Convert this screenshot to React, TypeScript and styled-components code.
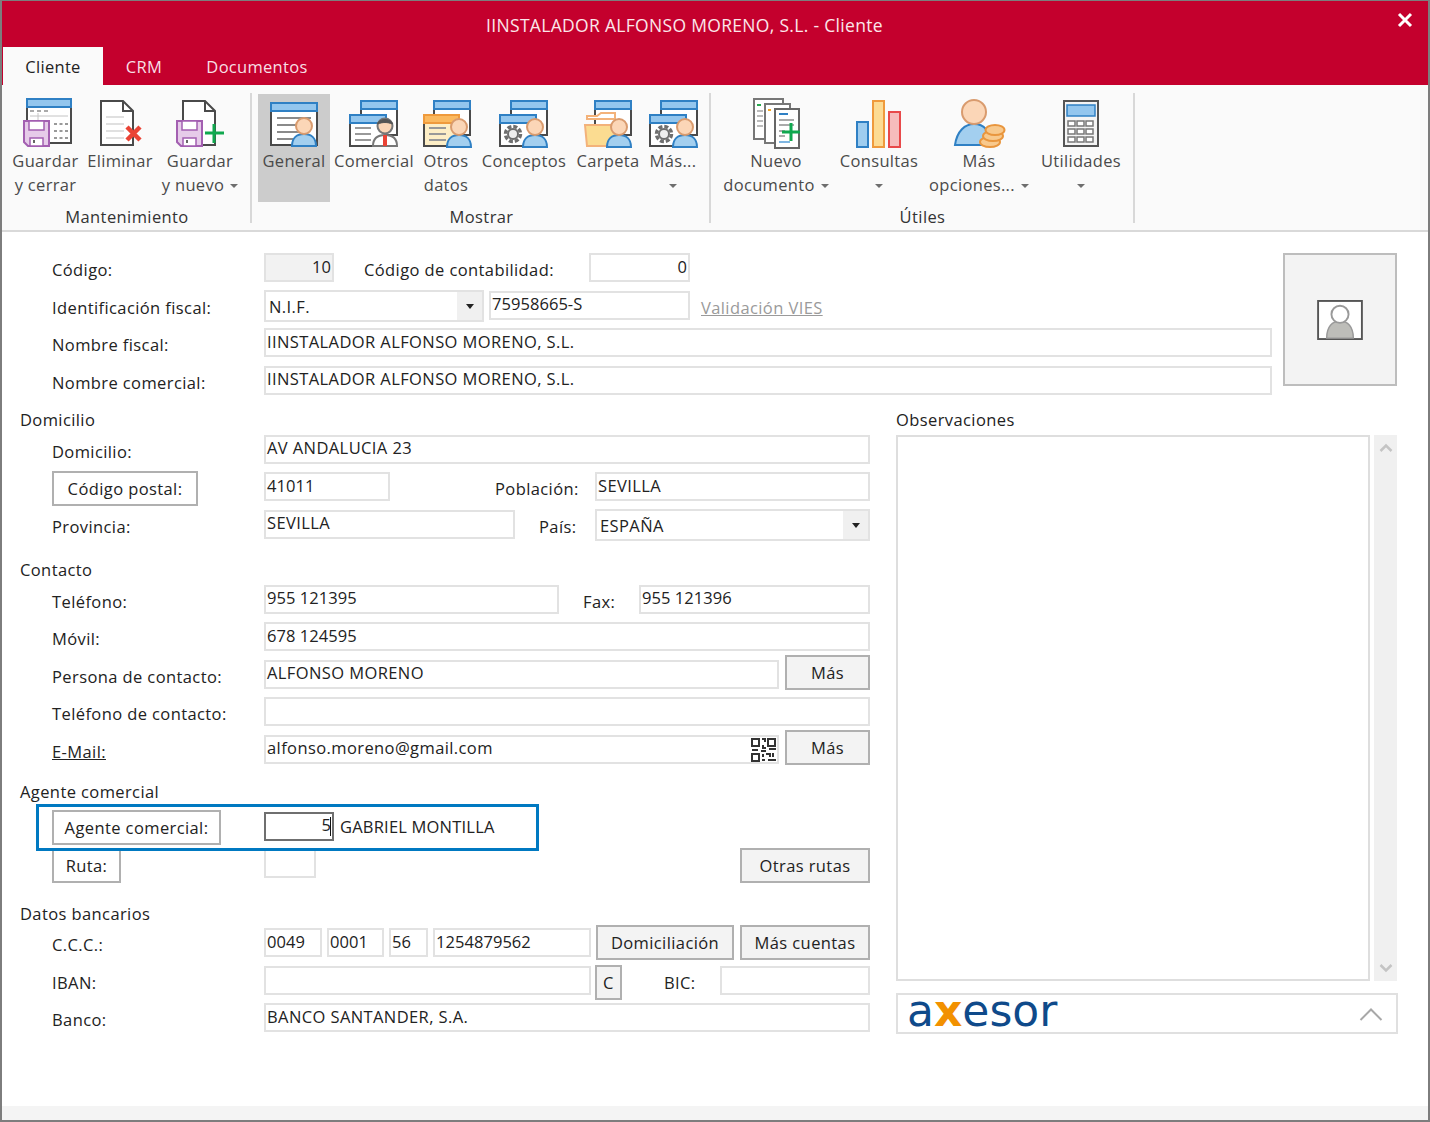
import React, { ReactNode } from 'react'
import styled, { createGlobalStyle } from 'styled-components'

const Global = createGlobalStyle`
  html, body { margin: 0; padding: 0; background: #fff; overflow: hidden; }
  * { box-sizing: border-box; }
`

const Win = styled.div`
  width: 1430px;
  height: 1122px;
  border: 2px solid #7d7d7d;
  border-top-width: 1px;
  display: flex;
  flex-direction: column;
  background: #fff;
  font-family: "Open Sans", "Noto Sans", sans-serif;
  font-size: 16.5px;
  letter-spacing: 0.4px;
  color: #222;
`

const TitleBar = styled.div`
  height: 44px;
  flex: none;
  background: #c4002d;
  color: #fbe6ea;
  font-size: 17.5px;
  letter-spacing: 0.31px;
  display: flex;
  align-items: center;
  justify-content: center;
  padding: 3px 61px 0 0;
  position: relative;
`

const CloseBtn = styled.svg`
  position: absolute;
  right: 15px;
  top: 11px;
`

const TabRow = styled.div`
  height: 40px;
  flex: none;
  background: #c4002d;
  display: flex;
  align-items: flex-end;
  padding-left: 1px;
`

const Tab = styled.div<{ $w: number; $active?: boolean }>`
  width: ${p => p.$w}px;
  height: 38px;
  display: flex;
  align-items: center;
  justify-content: center;
  letter-spacing: 0.3px;
  color: ${p => (p.$active ? '#222' : '#f8dfe4')};
  background: ${p => (p.$active ? '#fafafa' : 'transparent')};
`

const Ribbon = styled.div`
  height: 147px;
  flex: none;
  background: #fafafa;
  border-bottom: 2px solid #d9d9d9;
  display: flex;
  align-items: flex-start;
`

const Group = styled.div<{ $w: number; $pad: number }>`
  width: ${p => p.$w}px;
  padding: 9px 0 0 ${p => p.$pad}px;
  display: flex;
  flex-direction: column;
`

const GroupButtons = styled.div`
  display: flex;
  height: 108px;
`

const GroupLabel = styled.div`
  margin: 3px 0 0 -4px;
  line-height: 24px;
  text-align: center;
  color: #333;
`

const GroupSep = styled.div`
  width: 2px;
  height: 130px;
  margin-top: 8px;
  background: #d8d8d8;
`

const RibbonBtn = styled.div<{ $w: number; $active?: boolean }>`
  width: ${p => p.$w}px;
  flex: none;
  display: flex;
  flex-direction: column;
  align-items: center;
  background: ${p => (p.$active ? '#cccccc' : 'transparent')};
  color: #4a4a4a;
  letter-spacing: 0.32px;
  line-height: 24px;
  white-space: nowrap;
  svg { margin-top: 2px; flex: none; display: block; }
`

const BtnLine = styled.span`
  display: flex;
  align-items: center;
  height: 24px;
`

const Caret = styled.i<{ $ml?: number }>`
  display: inline-block;
  width: 0;
  height: 0;
  margin-left: ${p => p.$ml ?? 0}px;
  margin-top: 2px;
  border-left: 4px solid transparent;
  border-right: 4px solid transparent;
  border-top: 4px solid #6e6e6e;
`

const Body = styled.div`
  flex: 1;
  padding: 18.75px 0 0 18px;
`

const TopBlock = styled.div`
  display: flex;
`

const TopFields = styled.div`
  width: 1252px;
  margin-right: 11px;
`

const Photo = styled.div`
  width: 114px;
  height: 133px;
  margin-top: 2.25px;
  background: #f3f3f3;
  border: 2px solid #bdbdbd;
  display: flex;
  align-items: center;
  justify-content: center;
`

const Columns = styled.div`
  display: flex;
  gap: 26px;
`

const LeftCol = styled.div`
  width: 850px;
`

const RightCol = styled.div`
  width: 502px;
`

const SectionTitle = styled.div<{ $h: number; $pb?: number }>`
  height: ${p => p.$h}px;
  padding-bottom: ${p => p.$pb ?? 0}px;
  display: flex;
  align-items: flex-end;
  line-height: 24px;
  color: #222;
`

const Row = styled.div`
  height: 37.5px;
  padding-left: 32px;
  display: flex;
  align-items: center;
  white-space: nowrap;
`

const Slot = styled.div<{ $u?: boolean }>`
  width: 212px;
  flex: none;
  display: flex;
  align-items: center;
  text-decoration: ${p => (p.$u ? 'underline' : 'none')};
`

const InlineLabel = styled.div<{ $w: number; $ml: number }>`
  width: ${p => p.$w}px;
  margin-left: ${p => p.$ml}px;
  flex: none;
`

const Field = styled.div<{ $w: number; $ml?: number; $right?: boolean; $grey?: boolean; $dark?: boolean; $num?: boolean }>`
  width: ${p => p.$w}px;
  height: 29px;
  margin-left: ${p => p.$ml ?? 0}px;
  margin-bottom: 4px;
  flex: none;
  position: relative;
  display: flex;
  align-items: center;
  justify-content: ${p => (p.$right ? 'flex-end' : 'flex-start')};
  padding: 0 1px 3px 1px;
  letter-spacing: ${p => (p.$num ? '0.05px' : '0.4px')};
  border: 2px solid ${p => (p.$dark ? '#6f6f6f' : '#e2e2e2')};
  background: ${p => (p.$grey ? '#f2f2f2' : '#fff')};
  overflow: hidden;
`

const Select = styled.div<{ $w: number; $ml?: number }>`
  width: ${p => p.$w}px;
  height: 32px;
  margin-left: ${p => p.$ml ?? 0}px;
  margin-bottom: 2px;
  flex: none;
  display: flex;
  align-items: stretch;
  border: 2px solid #e2e2e2;
  background: #fff;
`

const SelectText = styled.div`
  flex: 1;
  padding: 1px 0 0 3px;
  display: flex;
  align-items: center;
`

const SelectArrow = styled.div`
  width: 25px;
  background: #f0f0f0;
  display: flex;
  align-items: center;
  justify-content: center;
  i {
    border-left: 4px solid transparent;
    border-right: 4px solid transparent;
    border-top: 5px solid #222;
  }
`

const VatLink = styled.div`
  margin-left: 11px;
  color: #9a9a9a;
  text-decoration: underline;
`

const Btn = styled.div<{ $w: number; $ml?: number; $up?: number; $white?: boolean; $right?: boolean }>`
  width: ${p => p.$w}px;
  height: 35px;
  margin-left: ${p => (p.$right ? 'auto' : `${p.$ml ?? 0}px`)};
  margin-bottom: ${p => p.$up ?? 0}px;
  flex: none;
  display: flex;
  align-items: center;
  justify-content: center;
  border: 2px solid #b0b0b0;
  background: ${p => (p.$white ? '#fff' : '#f3f3f3')};
`

const AgentName = styled.div`
  margin-left: 6px;
  margin-bottom: 4px;
  letter-spacing: 0.2px;
`

const AgentGroup = styled.div`
  position: relative;
`

const Highlight = styled.div`
  position: absolute;
  left: 16px;
  top: -5px;
  width: 503px;
  height: 47px;
  border: 3px solid #0079c1;
  pointer-events: none;
`

const Cursor = styled.span`
  position: absolute;
  right: 1px;
  top: 3px;
  width: 1px;
  height: 19px;
  background: #111;
`

const QrIcon = styled.svg`
  position: absolute;
  right: 0;
  top: 1px;
`

const ObsBox = styled.div`
  height: 546px;
  margin-top: 2.75px;
  display: flex;
  justify-content: space-between;
`

const ObsArea = styled.div`
  width: 474px;
  border: 2px solid #dedede;
  background: #fff;
`

const ScrollTrack = styled.div`
  width: 23px;
  margin-right: 1px;
  background: #f0f0f0;
  display: flex;
  flex-direction: column;
  align-items: center;
  justify-content: space-between;
  padding: 8px 0;
`

const LogoBox = styled.div`
  height: 41px;
  margin-top: 12px;
  border: 2px solid #e0e0e0;
  display: flex;
  align-items: center;
  justify-content: space-between;
  padding: 0 13px 0 9px;
`

const Logo = styled.div`
  font-family: "DejaVu Sans", sans-serif;
  font-size: 44px;
  letter-spacing: 0;
  line-height: 37px;
  height: 37px;
  color: #0f4a8a;
  margin-top: -6px;
  span { color: #f29100; font-weight: 700; }
`

const BottomBar = styled.div`
  height: 14px;
  flex: none;
  background: #f4f4f4;
`

const person = (cx: number, cy: number, shirt = '#a3cfef', line = '#2f80c4') => (
  <>
    <path d={`M${cx - 12} ${cy + 20} c0 -8 5 -12 12 -12 s12 4 12 12 z`} fill={shirt} stroke={line} strokeWidth="2" />
    <circle cx={cx} cy={cy} r="8" fill="#fbd6b7" stroke="#d99b6e" strokeWidth="2" />
  </>
)

const win = (x: number, y: number, w: number, h: number, bar = '#93c6ee', edge = '#2f80c4', fill = '#fff') => (
  <>
    <rect x={x} y={y} width={w} height={h} fill={fill} stroke="#4a4a4a" strokeWidth="2" />
    <rect x={x} y={y} width={w} height="8" fill={bar} stroke={edge} strokeWidth="2" />
  </>
)

const lines = (x: number, w: number, ys: number[], c = '#8a8a8a', dash?: string) =>
  ys.map(y => <line key={y} x1={x} x2={x + w} y1={y} y2={y} stroke={c} strokeWidth="2" strokeDasharray={dash} />)

const gear = (cx: number, cy: number) => (
  <>
    <circle cx={cx} cy={cy} r="7.5" fill="none" stroke="#6e6e6e" strokeWidth="3.5" strokeDasharray="4 1.9" />
    <circle cx={cx} cy={cy} r="5" fill="#eee" stroke="#6e6e6e" strokeWidth="2" />
  </>
)

const floppy = (x: number) => (
  <>
    <path d={`M${x} 121 h25 v25 h-21 l-4 -4 z`} fill="#e6cbe9" stroke="#a35fb1" strokeWidth="2" />
    <rect x={x + 5} y="121" width="15" height="9" fill="#fff" stroke="#a35fb1" strokeWidth="1.5" />
    <rect x={x + 6} y="138" width="13" height="8" fill="#fff" stroke="#a35fb1" strokeWidth="1.5" />
    <rect x={x + 9} y="140" width="2" height="3" fill="#666" />
  </>
)

const doc = (x: number) => (
  <path d={`M${x + 23} 101 h-22 v44 h32 v-34 z M${x + 23} 101 v10 h10`} fill="#fff" stroke="#4a4a4a" strokeWidth="2" />
)

const icons: Record<string, ReactNode> = {
  save: (
    <svg viewBox="15 96 60 53" width="60" height="53">
      {win(26, 99, 44, 44)}
      {lines(29, 20, [111], '#aaa', '4 3')}
      <path d="M29 116 H67 M37 113 V121" stroke="#c4c4c4" fill="none" />
      {lines(53, 14, [124, 131, 138], '#999', '3 2.5')}
      {floppy(23)}
    </svg>
  ),
  del: (
    <svg viewBox="90 96 60 53" width="60" height="53">
      {doc(100)}
      {lines(106, 18, [117, 124, 131, 138], '#e0e0e0')}
      <path d="M127 127 L140 140 M140 127 L127 140" stroke="#ea4335" strokeWidth="4.5" />
    </svg>
  ),
  saveNew: (
    <svg viewBox="170 96 60 53" width="60" height="53">
      {doc(182)}
      {floppy(177)}
      <path d="M214 124 V143 M205 133 H224" stroke="#10a84f" strokeWidth="3" />
    </svg>
  ),
  general: (
    <svg viewBox="264 96 60 53" width="60" height="53">
      {win(271, 103, 46, 42)}
      {lines(277, 34, [118])}
      {lines(277, 22, [125, 132, 139])}
      {person(304, 126)}
    </svg>
  ),
  comercial: (
    <svg viewBox="344 96 60 53" width="60" height="53">
      {win(361, 101, 36, 34)}
      {win(350, 115, 36, 31)}
      {lines(355, 16, [128, 134, 140], '#999')}
      <path d="M373 146 c0 -8 5 -11 12 -11 s12 3 12 11 z" fill="#fff" stroke="#777" strokeWidth="2" />
      <path d="M383 135 h4 v11 h-4 z" fill="#ea4335" />
      <circle cx="385" cy="126" r="7.5" fill="#fbd6b7" stroke="#777" strokeWidth="2" />
      <path d="M377.5 124 c1 -6 14 -6 15 0 c-5 -2 -10 -2 -15 0 z" fill="#555" stroke="#555" />
    </svg>
  ),
  otros: (
    <svg viewBox="416 96 60 53" width="60" height="53">
      {win(434, 101, 36, 34)}
      {win(424, 115, 35, 31, '#fbb95f', '#ef9a3c', '#fdeec6')}
      {lines(429, 17, [128, 134, 140], '#999')}
      {person(459, 127)}
    </svg>
  ),
  conceptos: (
    <svg viewBox="494 96 60 53" width="60" height="53">
      {win(511, 101, 36, 34)}
      {win(500, 115, 36, 31)}
      {gear(513, 134)}
      {person(535, 127)}
    </svg>
  ),
  carpeta: (
    <svg viewBox="578 96 60 53" width="60" height="53">
      {win(595, 101, 36, 34)}
      <path d="M587 116 h10 l4 -3 h14 v6 h-28 z" fill="#fff" stroke="#f3b27a" strokeWidth="2" />
      <path d="M585 125 h32 v21 h-30 z" fill="#fbdc91" stroke="#f3b27a" strokeWidth="2" />
      {person(619, 127)}
    </svg>
  ),
  mas: (
    <svg viewBox="643 96 60 53" width="60" height="53">
      {win(661, 101, 36, 34)}
      {win(650, 115, 36, 31)}
      {gear(664, 134)}
      {person(685, 127)}
    </svg>
  ),
  nuevo: (
    <svg viewBox="746 96 60 53" width="60" height="53">
      <rect x="754" y="99" width="29" height="40" fill="#fff" stroke="#777" strokeWidth="2" />
      {lines(757, 4, [105], '#2aa84f')}
      {lines(757, 6, [111, 116, 121, 126], '#bbb')}
      <rect x="765" y="104" width="25" height="39" fill="#fff" stroke="#777" strokeWidth="2" />
      {lines(768, 3, [110], '#f5a623')}
      <rect x="775" y="109" width="24" height="39" fill="#fff" stroke="#666" strokeWidth="2" />
      {lines(779, 9, [114], '#2f80c4')}
      {lines(779, 15, [120, 125], '#aaa')}
      {lines(779, 6, [131, 136], '#aaa')}
      {lines(779, 11, [142], '#7fb6e2')}
      <path d="M791 123 V141 M782 132 H800" stroke="#10a84f" strokeWidth="3" />
    </svg>
  ),
  consultas: (
    <svg viewBox="849 96 60 53" width="60" height="53">
      <rect x="857" y="122" width="11" height="25" fill="#9fcdef" stroke="#2f80c4" strokeWidth="2" />
      <rect x="873" y="101" width="11" height="46" fill="#fcdb93" stroke="#ef9a3c" strokeWidth="2" />
      <rect x="889" y="112" width="11" height="35" fill="#f6bcbc" stroke="#e8494a" strokeWidth="2" />
    </svg>
  ),
  opciones: (
    <svg viewBox="949 96 60 53" width="60" height="53">
      <path d="M955 145 c2 -14 10 -21 19 -21 s16 6 18 21 z" fill="#a3cfef" stroke="#2f80c4" strokeWidth="2" />
      <circle cx="974" cy="112" r="12" fill="#fbd6b7" stroke="#d99b6e" strokeWidth="2" />
      <ellipse cx="990" cy="142" rx="10" ry="5" fill="#f8c98d" stroke="#e9963e" strokeWidth="2" />
      <ellipse cx="993" cy="136" rx="10" ry="5" fill="#f8c98d" stroke="#e9963e" strokeWidth="2" />
      <ellipse cx="995" cy="130" rx="9.5" ry="5" fill="#f8c98d" stroke="#e9963e" strokeWidth="2" />
    </svg>
  ),
  util: (
    <svg viewBox="1051 96 60 53" width="60" height="53">
      <rect x="1064" y="101" width="34" height="45" fill="#f4f4f4" stroke="#555" strokeWidth="2" />
      <rect x="1067" y="105" width="28" height="11" fill="#93c6ee" stroke="#2f80c4" strokeWidth="1.5" />
      {[121, 129, 137].map(y =>
        [1068, 1077, 1086].map(x => (
          <rect key={`${x}-${y}`} x={x} y={y} width="7" height="5" fill="#fff" stroke="#777" strokeWidth="1.5" />
        ))
      )}
    </svg>
  ),
}

const RB = ({ w, icon, l1, l2, caret, active }: { w: number; icon: string; l1: string; l2?: string; caret?: boolean; active?: boolean }) => (
  <RibbonBtn $w={w} $active={active}>
    {icons[icon]}
    <BtnLine>{l1}</BtnLine>
    <BtnLine>
      {l2}
      {caret && <Caret $ml={l2 ? 6 : 0} />}
    </BtnLine>
  </RibbonBtn>
)

export default function App() {
  return (
    <Win>
      <Global />
      <TitleBar>
        IINSTALADOR ALFONSO MORENO, S.L. - Cliente
        <CloseBtn width="16" height="16" viewBox="0 0 16 16">
          <path d="M2 2 L14 14 M14 2 L2 14" stroke="#fff" strokeWidth="3" />
        </CloseBtn>
      </TitleBar>
      <TabRow>
        <Tab $w={100} $active>Cliente</Tab>
        <Tab $w={82}>CRM</Tab>
        <Tab $w={144}>Documentos</Tab>
      </TabRow>
      <Ribbon>
        <Group $w={248} $pad={6}>
          <GroupButtons>
            <RB w={75} icon="save" l1="Guardar" l2="y cerrar" />
            <RB w={74} icon="del" l1="Eliminar" />
            <RB w={86} icon="saveNew" l1="Guardar" l2="y nuevo" caret />
          </GroupButtons>
          <GroupLabel>Mantenimiento</GroupLabel>
        </Group>
        <GroupSep />
        <Group $w={457} $pad={6}>
          <GroupButtons>
            <RB w={72} icon="general" l1="General" active />
            <RB w={88} icon="comercial" l1="Comercial" />
            <RB w={56} icon="otros" l1="Otros" l2="datos" />
            <RB w={100} icon="conceptos" l1="Conceptos" />
            <RB w={68} icon="carpeta" l1="Carpeta" />
            <RB w={62} icon="mas" l1="Más..." caret />
          </GroupButtons>
          <GroupLabel>Mostrar</GroupLabel>
        </Group>
        <GroupSep />
        <Group $w={422} $pad={5}>
          <GroupButtons>
            <RB w={120} icon="nuevo" l1="Nuevo" l2="documento" caret />
            <RB w={86} icon="consultas" l1="Consultas" caret />
            <RB w={114} icon="opciones" l1="Más" l2="opciones..." caret />
            <RB w={90} icon="util" l1="Utilidades" caret />
          </GroupButtons>
          <GroupLabel>Útiles</GroupLabel>
        </Group>
        <GroupSep />
      </Ribbon>

      <Body>
        <TopBlock>
          <TopFields>
            <Row>
              <Slot>Código:</Slot>
              <Field $w={70} $right $grey $num>10</Field>
              <InlineLabel $w={225} $ml={30}>Código de contabilidad:</InlineLabel>
              <Field $w={101} $right $num>0</Field>
            </Row>
            <Row>
              <Slot>Identificación fiscal:</Slot>
              <Select $w={220}>
                <SelectText>N.I.F.</SelectText>
                <SelectArrow><i /></SelectArrow>
              </Select>
              <Field $w={201} $ml={5} $num>75958665-S</Field>
              <VatLink>Validación VIES</VatLink>
            </Row>
            <Row>
              <Slot>Nombre fiscal:</Slot>
              <Field $w={1008}>IINSTALADOR ALFONSO MORENO, S.L.</Field>
            </Row>
            <Row>
              <Slot>Nombre comercial:</Slot>
              <Field $w={1008}>IINSTALADOR ALFONSO MORENO, S.L.</Field>
            </Row>
          </TopFields>
          <Photo>
            <svg width="46" height="40" viewBox="0 0 48 42">
              <rect x="1" y="1" width="46" height="40" fill="#fff" stroke="#555" strokeWidth="2" />
              <path d="M10 40 c0 -12 6 -18 14 -18 s14 6 14 18 z" fill="#bdbdb9" stroke="#999" strokeWidth="1.5" />
              <circle cx="24" cy="15" r="9" fill="#fff" stroke="#999" strokeWidth="2" />
            </svg>
          </Photo>
        </TopBlock>

        <Columns>
          <LeftCol>
            <SectionTitle $h={31.5}>Domicilio</SectionTitle>
            <Row>
              <Slot>Domicilio:</Slot>
              <Field $w={606}>AV ANDALUCIA 23</Field>
            </Row>
            <Row>
              <Slot><Btn $w={146} $white>Código postal:</Btn></Slot>
              <Field $w={126} $num>41011</Field>
              <InlineLabel $w={100} $ml={105}>Población:</InlineLabel>
              <Field $w={275}>SEVILLA</Field>
            </Row>
            <Row>
              <Slot>Provincia:</Slot>
              <Field $w={251}>SEVILLA</Field>
              <InlineLabel $w={56} $ml={24}>País:</InlineLabel>
              <Select $w={275}>
                <SelectText>ESPAÑA</SelectText>
                <SelectArrow><i /></SelectArrow>
              </Select>
            </Row>

            <SectionTitle $h={37.5}>Contacto</SectionTitle>
            <Row>
              <Slot>Teléfono:</Slot>
              <Field $w={295} $num>955 121395</Field>
              <InlineLabel $w={56} $ml={24}>Fax:</InlineLabel>
              <Field $w={231} $num>955 121396</Field>
            </Row>
            <Row>
              <Slot>Móvil:</Slot>
              <Field $w={606} $num>678 124595</Field>
            </Row>
            <Row>
              <Slot>Persona de contacto:</Slot>
              <Field $w={515}>ALFONSO MORENO</Field>
              <Btn $w={85} $ml={6} $up={7}>Más</Btn>
            </Row>
            <Row>
              <Slot>Teléfono de contacto:</Slot>
              <Field $w={606} />
            </Row>
            <Row>
              <Slot $u>E-Mail:</Slot>
              <Field $w={515}>
                alfonso.moreno@gmail.com
                <QrIcon width="26" height="24" viewBox="0 0 26 24">
                  <g fill="none" stroke="#333" strokeWidth="2">
                    <rect x="1" y="1" width="7" height="7" />
                    <rect x="17" y="1" width="7" height="7" />
                    <rect x="1" y="16" width="7" height="7" />
                    <path d="M11 1 h3 v3 M12 7 v3 h3 M1 12 h6 M10 13 h5 M18 11 h7 M12 16 v3 M15 16 h4 v3 M22 15 v4 M11 22 h3 M17 22 h8" />
                  </g>
                </QrIcon>
              </Field>
              <Btn $w={85} $ml={6} $up={7}>Más</Btn>
            </Row>

            <SectionTitle $h={39.5} $pb={5}>Agente comercial</SectionTitle>
            <AgentGroup>
              <Row>
                <Slot><Btn $w={169} $white $up={1}>Agente comercial:</Btn></Slot>
                <Field $w={70} $right $dark $num>5<Cursor /></Field>
                <AgentName>GABRIEL MONTILLA</AgentName>
              </Row>
              <Row>
                <Slot><Btn $w={69} $white>Ruta:</Btn></Slot>
                <Field $w={52} />
                <Btn $w={130} $right>Otras rutas</Btn>
              </Row>
              <Highlight />
            </AgentGroup>

            <SectionTitle $h={41.5}>Datos bancarios</SectionTitle>
            <Row>
              <Slot>C.C.C.:</Slot>
              <Field $w={58} $num>0049</Field>
              <Field $w={57} $ml={5} $num>0001</Field>
              <Field $w={39} $ml={5} $num>56</Field>
              <Field $w={158} $ml={5} $num>1254879562</Field>
              <Btn $w={138} $ml={5} $up={5}>Domiciliación</Btn>
              <Btn $w={130} $ml={6} $up={5}>Más cuentas</Btn>
            </Row>
            <Row>
              <Slot>IBAN:</Slot>
              <Field $w={327} />
              <Btn $w={27} $ml={4}>C</Btn>
              <InlineLabel $w={56} $ml={42}>BIC:</InlineLabel>
              <Field $w={150} />
            </Row>
            <Row>
              <Slot>Banco:</Slot>
              <Field $w={606}>BANCO SANTANDER, S.A.</Field>
            </Row>
          </LeftCol>

          <RightCol>
            <SectionTitle $h={31.5}>Observaciones</SectionTitle>
            <ObsBox>
              <ObsArea />
              <ScrollTrack>
                <svg width="14" height="10" viewBox="0 0 14 10"><path d="M1.5 8 L7 2.5 L12.5 8" fill="none" stroke="#c4c4c4" strokeWidth="2.5" /></svg>
                <svg width="14" height="10" viewBox="0 0 14 10"><path d="M1.5 2 L7 7.5 L12.5 2" fill="none" stroke="#c4c4c4" strokeWidth="2.5" /></svg>
              </ScrollTrack>
            </ObsBox>
            <LogoBox>
              <Logo>a<span>x</span>esor</Logo>
              <svg width="24" height="14" viewBox="0 0 24 14"><path d="M1.5 13 L12 2.5 L22.5 13" fill="none" stroke="#a8a8a8" strokeWidth="2" /></svg>
            </LogoBox>
          </RightCol>
        </Columns>
      </Body>
      <BottomBar />
    </Win>
  )
}
